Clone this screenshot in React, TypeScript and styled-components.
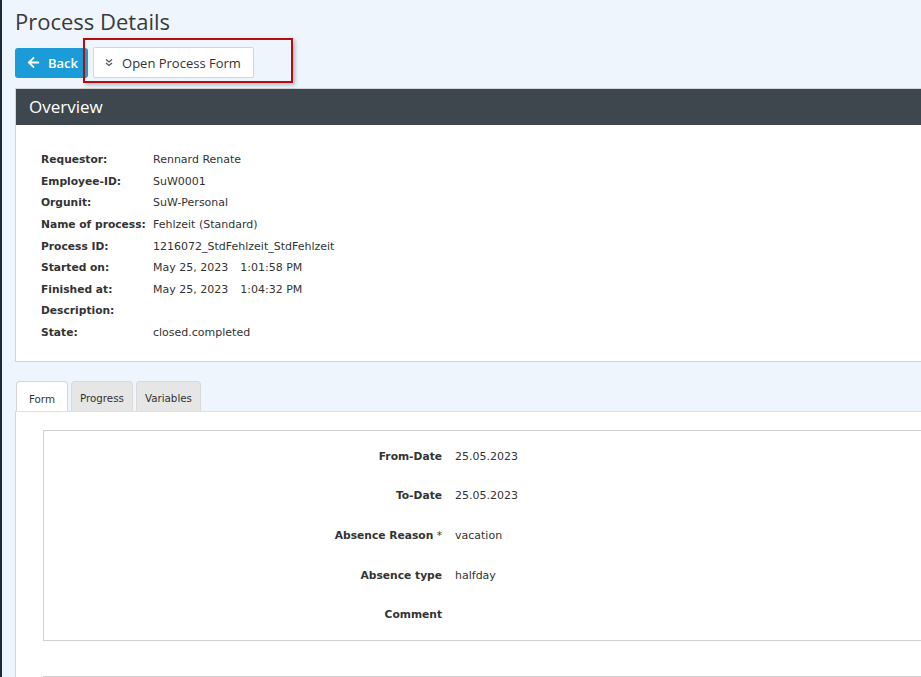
import React from "react";
import styled, { createGlobalStyle } from "styled-components";

const GlobalStyle = createGlobalStyle`
  html, body {
    margin: 0;
    padding: 0;
    background: #eef5fd;
    overflow: hidden;
  }
  body {
    font-family: "DejaVu Sans", Verdana, sans-serif;
    color: #333;
  }
`;

const Page = styled.div`
  min-width: 1000px;
  min-height: 677px;
  border-left: 2px solid #1d2a38;
  padding-left: 13px;
  box-sizing: border-box;
`;

const Title = styled.h1`
  margin: 0;
  padding-top: 7px;
  font-family: "Open Sans", sans-serif;
  font-weight: 400;
  font-size: 22px;
  line-height: 28px;
  color: #3a3a3a;
`;

const Toolbar = styled.div`
  position: relative;
  display: flex;
  align-items: center;
  gap: 5px;
  height: 31px;
  margin-top: 12px;
`;

const BackButton = styled.button`
  display: flex;
  align-items: center;
  gap: 8px;
  height: 30px;
  padding: 0 10px 0 12px;
  border: none;
  border-radius: 3px;
  background: #1b9bd8;
  color: #fff;
  font-family: "Open Sans", sans-serif;
  font-weight: 600;
  font-size: 13px;
`;

const FormButton = styled.button`
  display: flex;
  align-items: center;
  gap: 9px;
  height: 31px;
  padding: 0 12px 0 11px;
  border: 1px solid #d6d6d6;
  border-radius: 2px;
  background: #fff;
  color: #333;
  font-family: "Open Sans", sans-serif;
  font-size: 13px;
`;

const Highlight = styled.div`
  position: absolute;
  left: 68px;
  top: -9px;
  width: 210px;
  height: 45px;
  box-sizing: border-box;
  border: 2px solid #b50d0d;
  box-shadow: 2px 2px 4px rgba(0, 0, 0, 0.25);
  pointer-events: none;
`;

const Panel = styled.section`
  margin-top: 10px;
  border: 1px solid #cfd3d6;
  background: #fff;
`;

const PanelHeader = styled.div`
  height: 36px;
  display: flex;
  align-items: center;
  padding-left: 13px;
  padding-bottom: 1px;
  box-sizing: border-box;
  background: #3e474e;
  color: #fff;
  font-family: "Open Sans", sans-serif;
  font-size: 17px;
`;

const InfoGrid = styled.div`
  display: grid;
  grid-template-columns: 112px auto;
  grid-auto-rows: 21.6px;
  align-items: center;
  padding: 24px 25px 18px;
`;

const InfoLabel = styled.div`
  font-weight: 700;
  font-size: 10.7px;
  color: #333;
`;

const InfoValue = styled.div`
  color: #333;
  font-size: 11px;
`;

const Time = styled.span`
  margin-left: 12px;
`;

const TabBar = styled.div`
  display: flex;
  align-items: flex-end;
  gap: 3px;
  margin-top: 19px;
  padding-left: 1px;
  height: 30px;
`;

const Tab = styled.div<{ $active?: boolean }>`
  height: 30px;
  box-sizing: border-box;
  display: flex;
  align-items: center;
  padding: 0 ${(p) => (p.$active ? "12px" : "8px")};
  padding-top: ${(p) => (p.$active ? "4px" : "2px")};
  border: 1px solid ${(p) => (p.$active ? "#d4d4d4" : "#d9d9d9")};
  border-bottom: none;
  border-radius: 4px 4px 0 0;
  background: ${(p) => (p.$active ? "#fff" : "#e6e6e6")};
  font-size: 10.3px;
  color: #333;
`;

const TabBody = styled.div`
  background: #fff;
  border-left: 1px solid #d4d4d4;
  border-top: 1px solid #e0e0e0;
  padding: 18px 0 0 27px;
  min-height: 300px;
`;

const FormBox = styled.div<{ $tall?: boolean }>`
  border: 1px solid #d0d0d0;
  border-right: none;
  padding: 5px 0 5px;
  margin-bottom: 35px;
  min-height: ${(p) => (p.$tall ? "0" : "40px")};
`;

const FormRow = styled.div`
  display: grid;
  grid-template-columns: 398px auto;
  column-gap: 13px;
  align-items: center;
  height: 39.7px;
`;

const FormLabel = styled.div`
  text-align: right;
  font-weight: 700;
  font-size: 10.7px;
  color: #333;
`;

const Req = styled.span`
  font-weight: 400;
`;

const FormValue = styled.div`
  color: #333;
  font-size: 11px;
`;

const ArrowLeft = () => (
  <svg width="13" height="13" viewBox="0 0 448 512" fill="#fff">
    <path d="M257.5 445.1l-22.2 22.2c-9.4 9.4-24.6 9.4-33.9 0L7 273c-9.4-9.4-9.4-24.6 0-33.9L201.4 44.7c9.4-9.4 24.6-9.4 33.9 0l22.2 22.2c9.5 9.5 9.3 25-.4 34.3L136.6 216H424c13.3 0 24 10.7 24 24v32c0 13.3-10.7 24-24 24H136.6l120.5 114.8c9.8 9.3 10 24.8.4 34.3z" />
  </svg>
);

const DoubleDown = () => (
  <svg width="8" height="9" viewBox="0 0 8 9" fill="none" stroke="#555" strokeWidth="1.3">
    <path d="M1 1.5 L4 4 L7 1.5" />
    <path d="M1 5 L4 7.5 L7 5" />
  </svg>
);

const info: { label: string; value: string; time?: string }[] = [
  { label: "Requestor:", value: "Rennard Renate" },
  { label: "Employee-ID:", value: "SuW0001" },
  { label: "Orgunit:", value: "SuW-Personal" },
  { label: "Name of process:", value: "Fehlzeit (Standard)" },
  { label: "Process ID:", value: "1216072_StdFehlzeit_StdFehlzeit" },
  { label: "Started on:", value: "May 25, 2023", time: "1:01:58 PM" },
  { label: "Finished at:", value: "May 25, 2023", time: "1:04:32 PM" },
  { label: "Description:", value: "" },
  { label: "State:", value: "closed.completed" },
];

const formRows: { label: string; value: string; required?: boolean }[] = [
  { label: "From-Date", value: "25.05.2023" },
  { label: "To-Date", value: "25.05.2023" },
  { label: "Absence Reason", value: "vacation", required: true },
  { label: "Absence type", value: "halfday" },
  { label: "Comment", value: "" },
];

export default function App() {
  return (
    <>
      <GlobalStyle />
      <Page>
        <Title>Process Details</Title>
        <Toolbar>
          <BackButton>
            <ArrowLeft />
            Back
          </BackButton>
          <FormButton>
            <DoubleDown />
            Open Process Form
          </FormButton>
          <Highlight />
        </Toolbar>
        <Panel>
          <PanelHeader>Overview</PanelHeader>
          <InfoGrid>
            {info.map((r) => (
              <React.Fragment key={r.label}>
                <InfoLabel>{r.label}</InfoLabel>
                <InfoValue>
                  {r.value}
                  {r.time && <Time>{r.time}</Time>}
                </InfoValue>
              </React.Fragment>
            ))}
          </InfoGrid>
        </Panel>
        <TabBar>
          <Tab $active>Form</Tab>
          <Tab>Progress</Tab>
          <Tab>Variables</Tab>
        </TabBar>
        <TabBody>
          <FormBox $tall>
            {formRows.map((r) => (
              <FormRow key={r.label}>
                <FormLabel>
                  {r.label}
                  {r.required && <Req> *</Req>}
                </FormLabel>
                <FormValue>{r.value}</FormValue>
              </FormRow>
            ))}
          </FormBox>
          <FormBox />
        </TabBody>
      </Page>
    </>
  );
}
